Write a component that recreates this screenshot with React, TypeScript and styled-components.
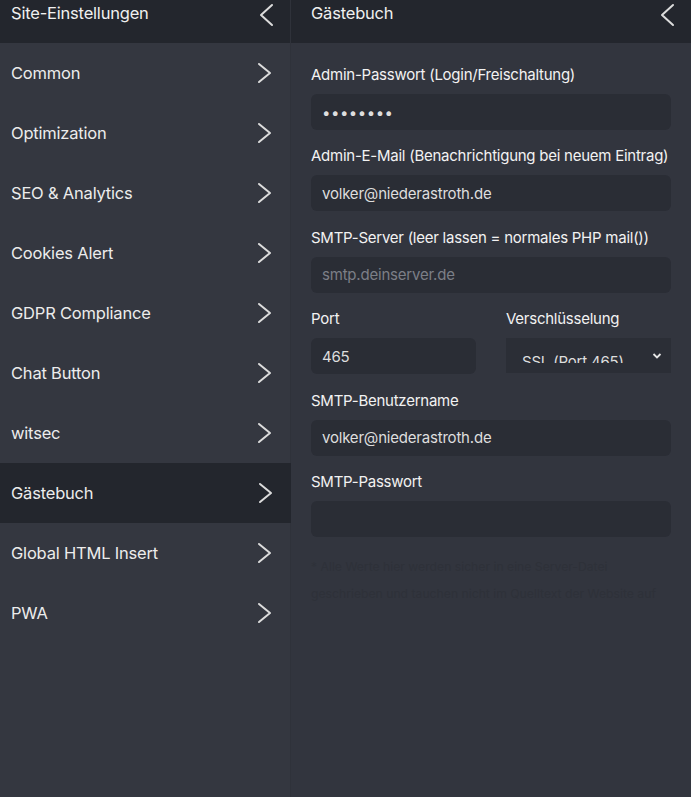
import React, { useState } from "react";
import styled, { createGlobalStyle } from "styled-components";

type MenuItem = {
  id: string;
  label: string;
};

const menuItems: MenuItem[] = [
  { id: "common", label: "Common" },
  { id: "optimization", label: "Optimization" },
  { id: "seo", label: "SEO & Analytics" },
  { id: "cookies", label: "Cookies Alert" },
  { id: "gdpr", label: "GDPR Compliance" },
  { id: "chat", label: "Chat Button" },
  { id: "witsec", label: "witsec" },
  { id: "guestbook", label: "Gästebuch" },
  { id: "html", label: "Global HTML Insert" },
  { id: "pwa", label: "PWA" },
];

const Chevron = ({ dir }: { dir: "left" | "right" }) => (
  <ChevronSvg width="16" height="24" viewBox="0 0 16 24" fill="none">
    {dir === "right" ? (
      <polyline points="2,3 13,12 2,21" />
    ) : (
      <polyline points="14,2 3,12 14,22" />
    )}
  </ChevronSvg>
);

export const App = () => {
  const [active, setActive] = useState("guestbook");
  const [adminPass, setAdminPass] = useState("geheim12");
  const [adminMail, setAdminMail] = useState("volker@niederastroth.de");
  const [smtpHost, setSmtpHost] = useState("");
  const [port, setPort] = useState("465");
  const [smtpUser, setSmtpUser] = useState("volker@niederastroth.de");
  const [smtpPass, setSmtpPass] = useState("");

  return (
    <>
      <GlobalStyle />
      <Layout>
        <Sidebar>
          <Header>
            <HeaderTitle>Site-Einstellungen</HeaderTitle>
            <Chevron dir="left" />
          </Header>
          {menuItems.map((item) => (
            <MenuRow
              key={item.id}
              $active={item.id === active}
              onClick={() => setActive(item.id)}
            >
              <span>{item.label}</span>
              <Chevron dir="right" />
            </MenuRow>
          ))}
        </Sidebar>

        <Panel>
          <Header $wide>
            <HeaderTitle>Gästebuch</HeaderTitle>
            <Chevron dir="left" />
          </Header>
          <Form onSubmit={(e) => e.preventDefault()}>
            <Field>
              <Label>Admin-Passwort (Login/Freischaltung)</Label>
              <TextInput
                type="password"
                value={adminPass}
                onChange={(e) => setAdminPass(e.target.value)}
              />
            </Field>
            <Field>
              <Label>Admin-E-Mail (Benachrichtigung bei neuem Eintrag)</Label>
              <TextInput
                type="text"
                value={adminMail}
                onChange={(e) => setAdminMail(e.target.value)}
              />
            </Field>
            <Field>
              <Label>SMTP-Server (leer lassen = normales PHP mail())</Label>
              <TextInput
                type="text"
                placeholder="smtp.deinserver.de"
                value={smtpHost}
                onChange={(e) => setSmtpHost(e.target.value)}
              />
            </Field>
            <Split>
              <Field>
                <Label>Port</Label>
                <TextInput
                  type="text"
                  value={port}
                  onChange={(e) => setPort(e.target.value)}
                />
              </Field>
              <Field>
                <Label>Verschlüsselung</Label>
                <SelectBox>
                  <SelectValue>SSL (Port 465)</SelectValue>
                  <svg width="10" height="8" viewBox="0 0 10 8" fill="none">
                    <polyline
                      points="1.5,2 5,5.5 8.5,2"
                      stroke="#e6e6e6"
                      strokeWidth="1.8"
                    />
                  </svg>
                </SelectBox>
              </Field>
            </Split>
            <Field>
              <Label>SMTP-Benutzername</Label>
              <TextInput
                type="text"
                value={smtpUser}
                onChange={(e) => setSmtpUser(e.target.value)}
              />
            </Field>
            <Field>
              <Label>SMTP-Passwort</Label>
              <TextInput
                type="password"
                value={smtpPass}
                onChange={(e) => setSmtpPass(e.target.value)}
              />
            </Field>
            <Hint>
              * Alle Werte hier werden sicher in eine Server-Datei geschrieben
              und tauchen nicht im Quelltext der Website auf
            </Hint>
          </Form>
        </Panel>
      </Layout>
    </>
  );
};

const GlobalStyle = createGlobalStyle`
  html, body {
    margin: 0;
    padding: 0;
    background: #33363f;
  }
  body {
    font-family: Inter, "Noto Sans", sans-serif;
    color: #ececec;
  }
`;

const Layout = styled.div`
  display: grid;
  grid-template-columns: 291px 1fr;
  min-height: 797px;
`;

const Sidebar = styled.nav`
  background: #343740;
  border-right: 1px solid #2f323a;
`;

const Panel = styled.section`
  background: #32353e;
`;

const Header = styled.div<{ $wide?: boolean }>`
  display: flex;
  align-items: flex-start;
  justify-content: space-between;
  height: 43px;
  box-sizing: border-box;
  padding: 3px 16px 0 ${(p) => (p.$wide ? "20px" : "11px")};
  background: #23262d;
`;

const HeaderTitle = styled.span`
  font-size: 16.5px;
  line-height: 20px;
  font-weight: 400;
  letter-spacing: -0.2px;
  color: #f0f0f0;
`;

const ChevronSvg = styled.svg`
  flex-shrink: 0;
  polyline {
    stroke: #dcdcdc;
    stroke-width: 2;
    stroke-linecap: round;
    stroke-linejoin: round;
  }
`;

const MenuRow = styled.div<{ $active?: boolean }>`
  display: flex;
  align-items: center;
  justify-content: space-between;
  height: 60px;
  padding: 0 17px 0 11px;
  font-size: 16.5px;
  font-weight: 400;
  letter-spacing: -0.2px;
  color: #ececec;
  cursor: pointer;
  background: ${(p) => (p.$active ? "#23262d" : "transparent")};
  margin-right: ${(p) => (p.$active ? "-1px" : "0")};
`;

const Form = styled.form`
  display: flex;
  flex-direction: column;
  gap: 16.4px;
  padding: 22px 20px 0 20px;
`;

const Field = styled.div`
  display: flex;
  flex-direction: column;
  gap: 9px;
  min-width: 0;
`;

const Split = styled.div`
  display: grid;
  grid-template-columns: 165px 165px;
  justify-content: space-between;
`;

const Label = styled.label`
  font-size: 15px;
  line-height: 20px;
  font-weight: 400;
  letter-spacing: -0.25px;
  color: #f2f2f2;
`;

const TextInput = styled.input`
  box-sizing: border-box;
  width: 100%;
  height: 36px;
  padding: 0 11px;
  border: none;
  border-radius: 6px;
  background: #2a2d35;
  color: #dedede;
  font-family: Inter, "Noto Sans", sans-serif;
  font-size: 15px;
  letter-spacing: -0.2px;
  outline: none;

  &::placeholder {
    color: #7c7f87;
  }
  &[type="password"] {
    letter-spacing: 0.5px;
  }
`;

const SelectBox = styled.div`
  display: flex;
  align-items: flex-start;
  justify-content: space-between;
  box-sizing: border-box;
  height: 35px;
  padding: 0 9px 0 16px;
  background: #2b2e36;
  svg {
    margin-top: 14px;
  }
`;

const SelectValue = styled.div`
  height: 25px;
  overflow: hidden;
  padding-top: 12px;
  box-sizing: border-box;
  font-size: 15px;
  line-height: 24px;
  letter-spacing: -0.2px;
  color: #dedede;
`;

const Hint = styled.p`
  margin: 0;
  font-size: 12.2px;
  line-height: 27px;
  color: #2e3139;
`;

export default App;
